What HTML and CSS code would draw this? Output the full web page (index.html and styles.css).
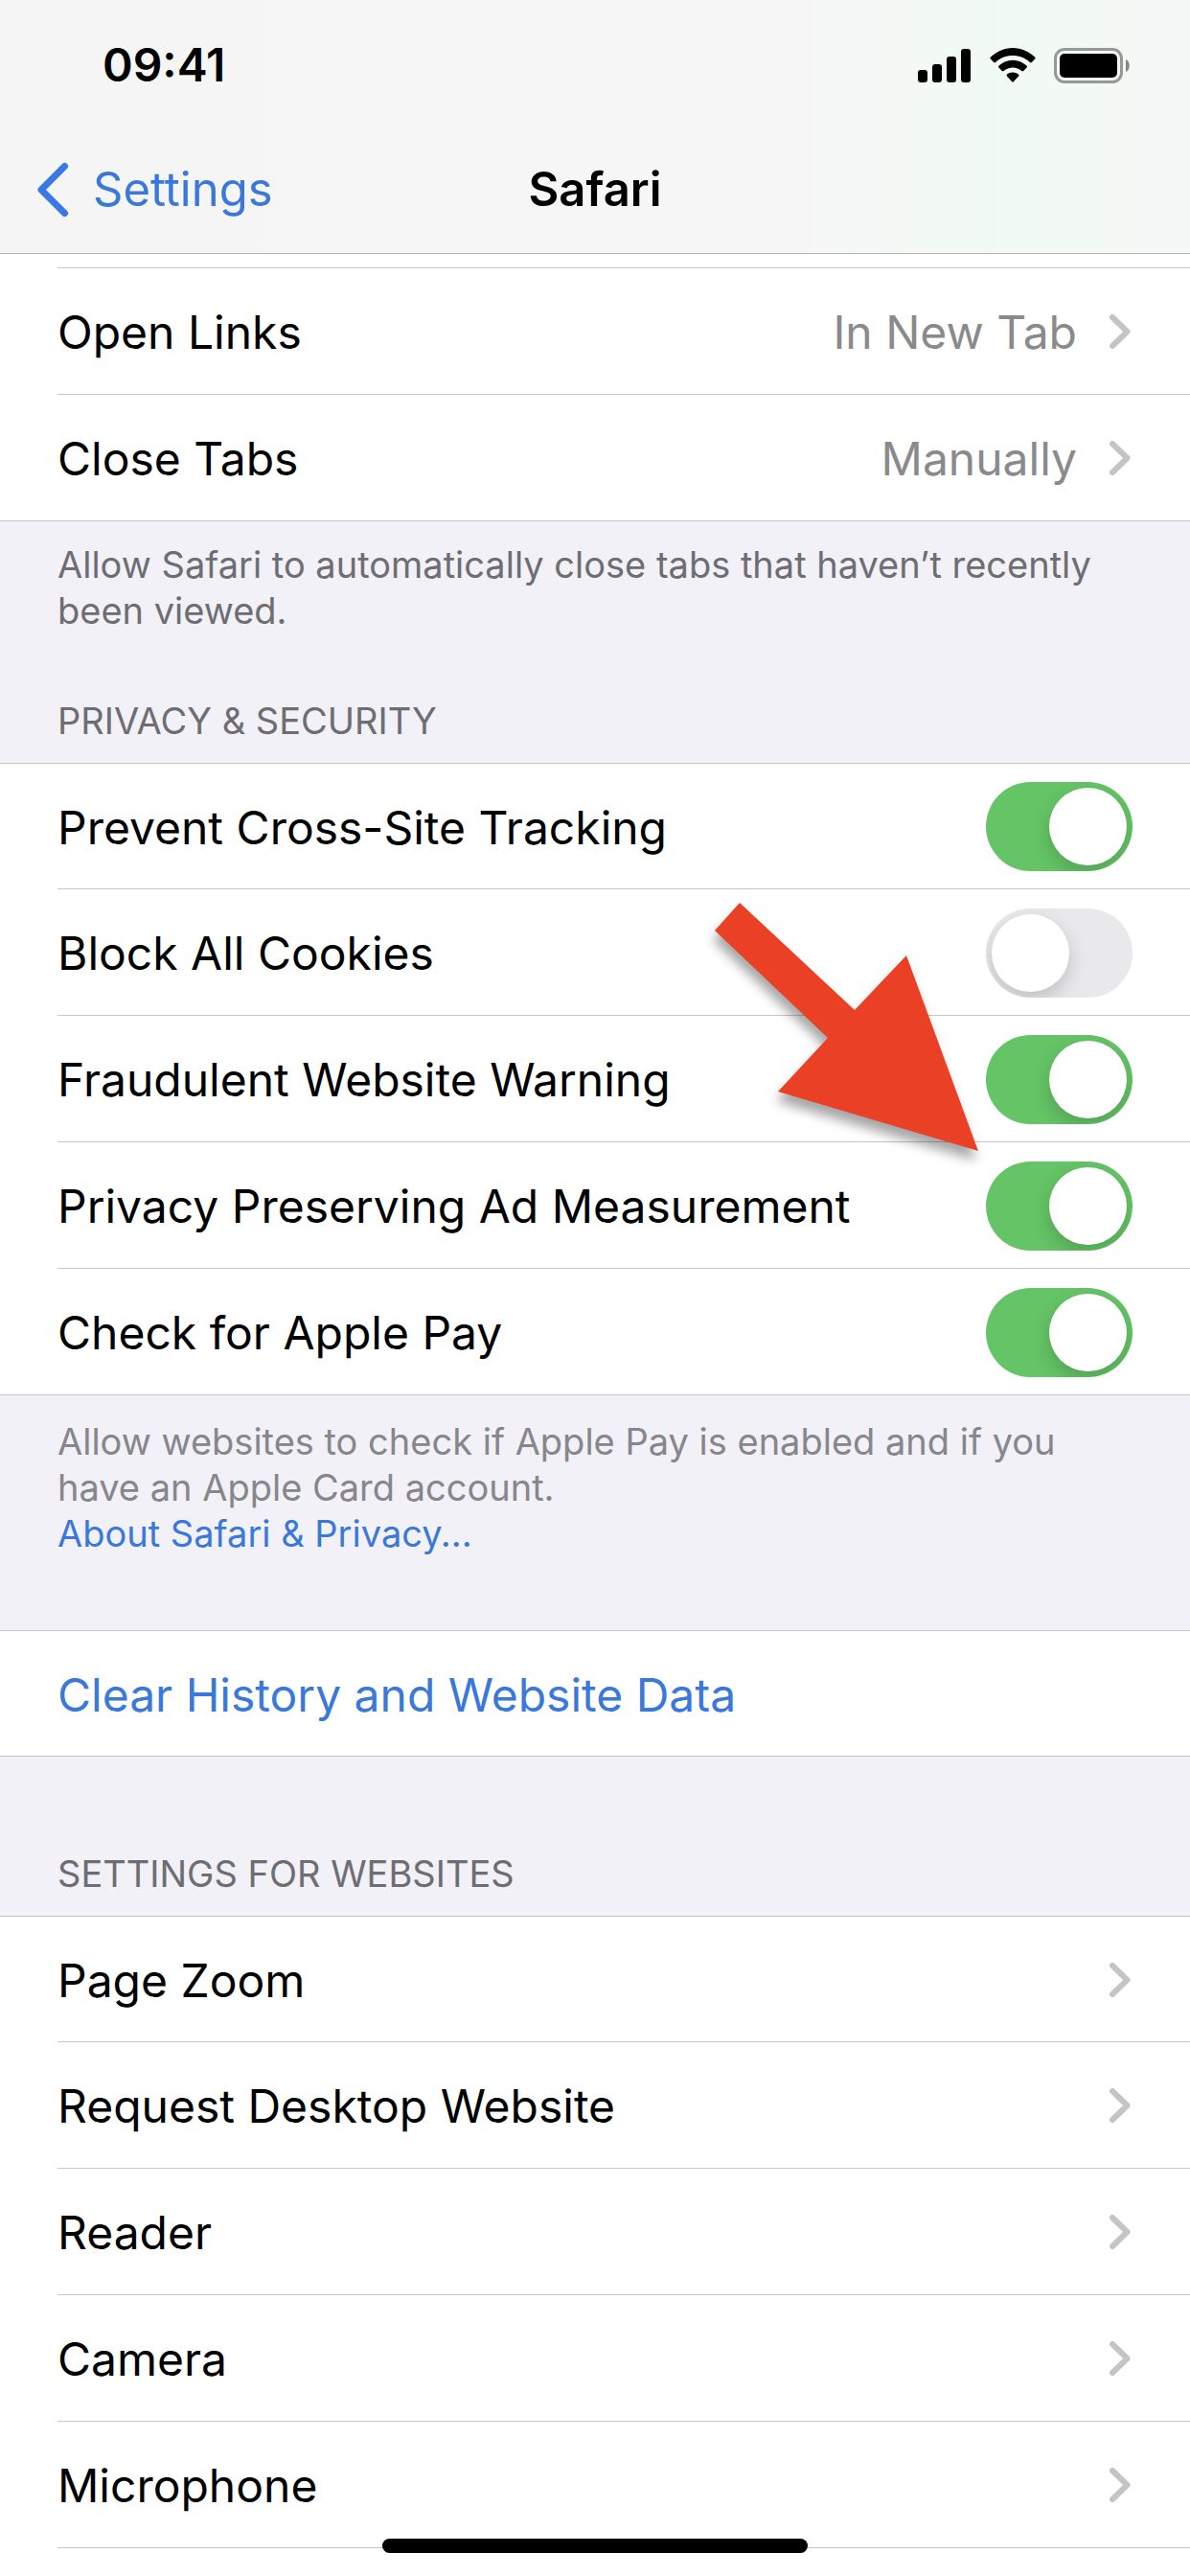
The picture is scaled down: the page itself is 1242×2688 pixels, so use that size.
FILE: index.html
```html
<!DOCTYPE html>
<html lang="en">
<head>
<meta charset="utf-8">
<meta name="viewport" content="width=device-width, initial-scale=1">
<title>Safari</title>
<link rel="stylesheet" href="styles.css">
</head>
<body>
<svg class="symbols" aria-hidden="true">
  <symbol id="chevron" viewBox="0 0 22 36"><path d="M3 3 L18.500 18 L3 33" fill="none" stroke="currentColor" stroke-width="6" stroke-linecap="round" stroke-linejoin="round"/></symbol>
</svg>

<header class="top">
  <div class="status">
    <time class="clock">09:41</time>
    <div class="status-icons">
      <svg width="56" height="36" viewBox="0 0 56 36" aria-label="Signal">
        <rect x="0" y="23" width="10" height="13" rx="3"/>
        <rect x="15" y="17" width="10" height="19" rx="3"/>
        <rect x="30" y="9" width="10" height="27" rx="3"/>
        <rect x="45" y="1" width="10" height="35" rx="3"/>
      </svg>
      <svg width="48" height="37" viewBox="0 0 48 37" aria-label="Wi-Fi">
        <path d="M24 0 C33 0 41 4 47 9.500 Q48.200 10.500 47.200 11.600 L43.800 15 Q42.900 15.800 41.900 14.900 C37 10.500 31 8 24 8 C17 8 11 10.500 6.100 14.900 Q5.100 15.800 4.200 15 L0.800 11.600 Q-0.200 10.500 1 9.500 C7 4 15 0 24 0Z"/>
        <path d="M24 12.800 C29.500 12.800 34.500 15 38.500 18.600 Q39.600 19.600 38.600 20.600 L35.200 24 Q34.300 24.900 33.300 24 C30.800 21.900 27.600 20.600 24 20.600 C20.400 20.600 17.200 21.900 14.700 24 Q13.700 24.900 12.800 24 L9.400 20.600 Q8.400 19.600 9.500 18.600 C13.500 15 18.500 12.800 24 12.800Z"/>
        <path d="M24 25.400 C26.300 25.400 28.400 26.200 30 27.500 Q31 28.400 30.100 29.400 L24.800 35.300 Q24 36.200 23.200 35.300 L17.900 29.400 Q17 28.400 18 27.500 C19.600 26.200 21.700 25.400 24 25.400Z"/>
      </svg>
      <svg width="80" height="37" viewBox="0 0 80 37" aria-label="Battery">
        <rect x="1.500" y="1.500" width="69" height="34" rx="9.500" fill="none" stroke="#969896" stroke-width="3"/>
        <rect x="6" y="6" width="60" height="25" rx="5"/>
        <path d="M75 12 C80 14 80 23 75 25Z" fill="#858785"/>
      </svg>
    </div>
  </div>
  <nav class="nav">
    <a class="back" href="#settings">
      <svg class="back-icon" width="34" height="58" viewBox="0 0 34 58" aria-hidden="true"><path d="M29.500 4.500 L5 29 L29.500 53.500" fill="none" stroke="currentColor" stroke-width="7" stroke-linecap="round" stroke-linejoin="round"/></svg>
      <span>Settings</span>
    </a>
    <h1 class="title">Safari</h1>
  </nav>
</header>

<main class="content">
  <div class="scrolled-row"></div>
  <section class="group group-continued">
    <a class="row" href="#open-links"><span class="label">Open Links</span><span class="value">In New Tab</span><svg class="chevron"><use href="#chevron"/></svg></a>
    <a class="row" href="#close-tabs"><span class="label">Close Tabs</span><span class="value">Manually</span><svg class="chevron"><use href="#chevron"/></svg></a>
  </section>
  <p class="note">Allow Safari to automatically close tabs that haven’t recently been viewed.</p>

  <h2 class="heading">PRIVACY &amp; SECURITY</h2>
  <section class="group">
    <label class="row"><span class="label">Prevent Cross-Site Tracking</span><input class="switch" type="checkbox" role="switch" checked></label>
    <label class="row"><span class="label">Block All Cookies</span><input class="switch" type="checkbox" role="switch"></label>
    <label class="row"><span class="label">Fraudulent Website Warning</span><input class="switch" type="checkbox" role="switch" checked></label>
    <label class="row"><span class="label">Privacy Preserving Ad Measurement</span><input class="switch" type="checkbox" role="switch" checked></label>
    <label class="row"><span class="label">Check for Apple Pay</span><input class="switch" type="checkbox" role="switch" checked></label>
    <svg class="pointer" width="280" height="264" viewBox="0 0 280 264" aria-hidden="true"><path d="M29 2 L3 31 L121 143 L69 199 L278 261 L203 57 L149 114Z" fill="#ea4025"/></svg>
  </section>
  <div class="note note-light">
    <p>Allow websites to check if Apple Pay is enabled and if you have an Apple Card account.</p>
    <a class="link" href="#about">About Safari &amp; Privacy...</a>
  </div>

  <section class="group group-action">
    <button class="row link" type="button"><span class="label">Clear History and Website Data</span></button>
  </section>

  <h2 class="heading heading-far">SETTINGS FOR WEBSITES</h2>
  <section class="group group-last">
    <a class="row" href="#page-zoom"><span class="label">Page Zoom</span><svg class="chevron"><use href="#chevron"/></svg></a>
    <a class="row" href="#desktop"><span class="label">Request Desktop Website</span><svg class="chevron"><use href="#chevron"/></svg></a>
    <a class="row" href="#reader"><span class="label">Reader</span><svg class="chevron"><use href="#chevron"/></svg></a>
    <a class="row" href="#camera"><span class="label">Camera</span><svg class="chevron"><use href="#chevron"/></svg></a>
    <a class="row" href="#microphone"><span class="label">Microphone</span><svg class="chevron"><use href="#chevron"/></svg></a>
  </section>
</main>
<div class="home-indicator"></div>
</body>
</html>
```
FILE: styles.css
```css
* {
  box-sizing: border-box;
  margin: 0;
  padding: 0;
}

:root {
  --line: #c6c6c9;
  --blue: #3a78d9;
  --inset: 60px;
}

body {
  display: flex;
  flex-direction: column;
  min-height: 100vh;
  background: #f2f1f7;
  color: #000;
  font-family: Inter, "Liberation Sans", sans-serif;
  font-size: 48px;
  line-height: 60px;
}

a {
  color: inherit;
  text-decoration: none;
}

.symbols {
  display: none;
}

/* Status bar and navigation */

.top {
  background: linear-gradient(90deg, #f5f5f5 0%, #f6f6f7 68%, #f1faf2 83%, #f2faf3 90%, #f6f7f7 98%);
  border-bottom: 1px solid #b2b2b3;
}

.status {
  display: flex;
  align-items: center;
  justify-content: space-between;
  height: 132px;
  padding: 4px 62px 0 107px;
}

.clock {
  font-weight: 600;
}

.status-icons {
  display: flex;
  align-items: center;
  gap: 19px;
}

.nav {
  display: grid;
  grid-template-columns: 1fr auto 1fr;
  align-items: center;
  height: 132px;
  padding: 0 38px;
  font-size: 49px;
}

.back {
  display: flex;
  align-items: center;
  gap: 25px;
  color: var(--blue);
}

.back-icon {
  color: #3a78e6;
}

.title {
  font-size: inherit;
  font-weight: 600;
}

/* Grouped list */

.content {
  display: flex;
  flex: 1;
  flex-direction: column;
}

.scrolled-row {
  height: 15px;
  background: linear-gradient(var(--line), var(--line)) var(--inset) 100% / 100% 1px no-repeat #fff;
}

.group {
  position: relative;
  background: #fff;
}

.row {
  display: flex;
  align-items: center;
  width: 100%;
  height: 132px;
  padding: 0 var(--inset);
  border: 0;
  background: linear-gradient(var(--line), var(--line)) var(--inset) 100% / 100% 1px no-repeat;
  font: inherit;
  text-align: left;
}

.row:first-child {
  border-top: 1px solid var(--line);
}

.row:last-child,
.row:has(+ .pointer) {
  background-position: 0 100%;
}

.group-continued .row:first-child {
  border-top: 0;
}

.group-last {
  flex: 1;
}

.group-last .row:last-child {
  background-position: var(--inset) 100%;
}

.label,
.value {
  padding-top: 2px;
}

.label {
  flex: 1;
}

.value {
  color: #8a8a8c;
}

.chevron {
  width: 22px;
  height: 36px;
  margin: 0 2px 0 34px;
  color: #c4c4c6;
}

.switch {
  width: 153px;
  height: 93px;
  padding: 6px;
  border-radius: 47px;
  background: #e9e9eb;
  appearance: none;
  display: flex;
  overflow: hidden;
}

.switch::before {
  content: "";
  width: 81px;
  height: 81px;
  border-radius: 50%;
  background: #fff;
  box-shadow: 0 8px 20px rgba(0, 0, 0, 0.18);
}

.switch:checked {
  justify-content: flex-end;
  background: #65c466;
}

/* Text between groups */

.note {
  padding: 21px var(--inset) 0;
  color: #6d6d72;
  font-size: 38px;
  line-height: 48px;
}

.note-light {
  padding-top: 24px;
  color: #86868b;
}

.link,
.note .link {
  color: var(--blue);
}

.heading {
  padding: 67px var(--inset) 20px;
  color: #6d6d72;
  font-size: 38px;
  font-weight: 400;
  line-height: 48px;
}

.heading-far {
  padding-top: 98px;
}

.group-action {
  margin-top: 77px;
}

/* Callout arrow over the switches */

.pointer {
  position: absolute;
  top: 144px;
  right: 219px;
  overflow: visible;
  filter: drop-shadow(-2px 10px 6px rgba(0, 0, 0, 0.35));
  pointer-events: none;
}

.home-indicator {
  position: fixed;
  bottom: 24px;
  left: 50%;
  width: 444px;
  height: 15px;
  margin-left: -222px;
  border-radius: 8px;
  background: #000;
}
```
